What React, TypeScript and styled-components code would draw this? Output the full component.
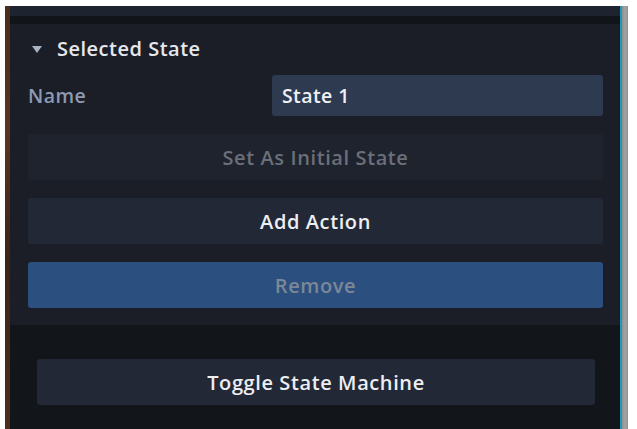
import React from "react";
import styled, { createGlobalStyle } from "styled-components";

const Global = createGlobalStyle`
  html, body { margin: 0; padding: 0; background: #ffffff; }
  body { font-family: "Open Sans", "Noto Sans", sans-serif; }
  * { box-sizing: border-box; }
`;

const Page = styled.div`
  width: 637px;
  height: 429px;
  padding-top: 6px;
  display: flex;
  background: #ffffff;
  overflow: hidden;
`;

const Backdrop = styled.div`
  width: 5px;
  margin-left: 5px;
  background: linear-gradient(180deg, #4a2c1c 0%, #5a3420 30%, #3b2418 60%, #4d2e1c 100%);
`;

const Panel = styled.div`
  width: 610px;
  display: flex;
  flex-direction: column;
  background: #13161b;
`;

const Edge = styled.div`
  width: 2px;
  background: #1f9bb5;
`;

const Scroll = styled.div`
  width: 6px;
  background: linear-gradient(90deg, #8a8d90, #a3a5a7 50%, #8d8f92);
`;

const TopBar = styled.div`
  height: 10px;
  background: #1e2330;
`;

const Divider = styled.div`
  height: 8px;
  background: #111418;
`;

const Section = styled.div`
  background: #1b1e27;
  padding: 12px 17px 17px 18px;
  display: flex;
  flex-direction: column;
`;

const Header = styled.div`
  display: flex;
  align-items: center;
  height: 24px;
  gap: 15px;
  padding-left: 4px;
  color: #e6e8ec;
  font-size: 20px;
  letter-spacing: 0.5px;
  font-weight: 600;
`;

const Triangle = styled.span`
  width: 0;
  height: 0;
  border-left: 5.5px solid transparent;
  border-right: 5.5px solid transparent;
  border-top: 7px solid #a9b3c6;
  margin-top: 3px;
`;

const Row = styled.div`
  display: flex;
  align-items: center;
  justify-content: space-between;
  margin-top: 15px;
`;

const Label = styled.span`
  color: #8c9ab2;
  font-size: 19.5px;
  letter-spacing: 0.4px;
  font-weight: 600;
`;

const Input = styled.div`
  width: 331px;
  height: 41px;
  border-radius: 3px;
  background: #2d3a50;
  color: #eef0f3;
  font-size: 19.5px;
  letter-spacing: 0.4px;
  font-weight: 600;
  display: flex;
  align-items: center;
  padding-left: 10px;
`;

const Buttons = styled.div`
  display: flex;
  flex-direction: column;
  gap: 18px;
  margin-top: 18px;
`;

const Button = styled.div<{ $variant: "disabled" | "normal" | "primary" }>`
  height: 46px;
  border-radius: 3px;
  display: flex;
  align-items: center;
  justify-content: center;
  font-size: 20px;
  letter-spacing: 0.6px;
  font-weight: 600;
  background: ${(p) =>
    p.$variant === "primary" ? "#2b5080" : p.$variant === "normal" ? "#222836" : "#1f232d"};
  color: ${(p) =>
    p.$variant === "primary" ? "#7c8796" : p.$variant === "normal" ? "#eceef2" : "#6a6f79"};
`;

const Footer = styled.div`
  flex: 1;
  background: #12151a;
  padding: 34px 25px 0 27px;
`;

export default function App() {
  return (
    <>
      <Global />
      <Page>
        <Backdrop />
        <Panel>
          <TopBar />
          <Divider />
          <Section>
            <Header>
              <Triangle />
              <span>Selected State</span>
            </Header>
            <Row>
              <Label>Name</Label>
              <Input>State 1</Input>
            </Row>
            <Buttons>
              <Button $variant="disabled">Set As Initial State</Button>
              <Button $variant="normal">Add Action</Button>
              <Button $variant="primary">Remove</Button>
            </Buttons>
          </Section>
          <Footer>
            <Button $variant="normal">Toggle State Machine</Button>
          </Footer>
        </Panel>
        <Edge />
        <Scroll />
      </Page>
    </>
  );
}
